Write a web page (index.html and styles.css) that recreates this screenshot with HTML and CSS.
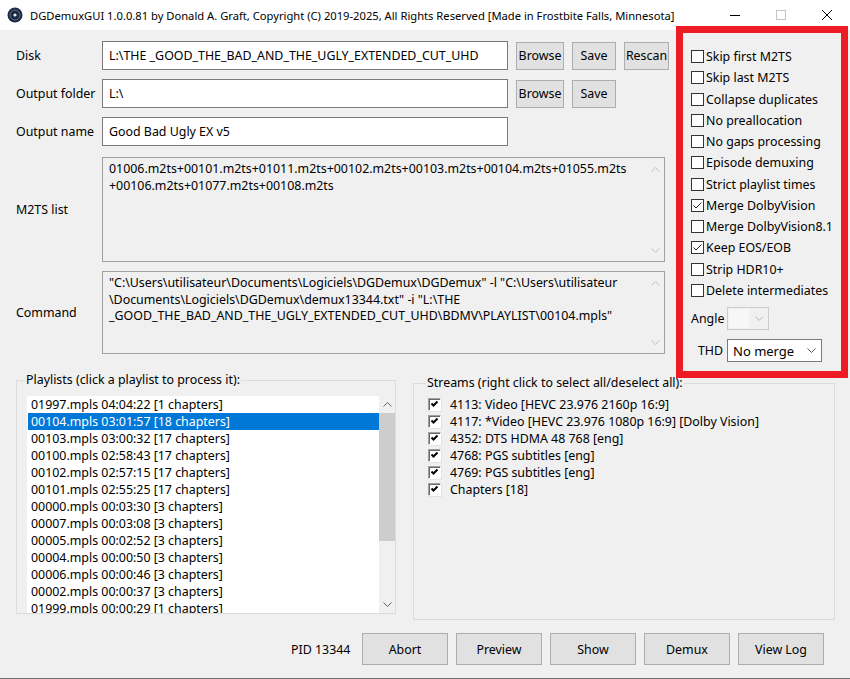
FILE: index.html
```html
<!DOCTYPE html>
<html lang="en">
<head>
  <meta charset="UTF-8">
  <title>DGDemuxGUI</title>
  <link rel="stylesheet" href="styles.css">
</head>
<body>
  <div class="titlebar">
    <svg class="app-icon" width="16" height="16" viewBox="0 0 16 16">
      <circle cx="8" cy="8" r="7.5" fill="#1c2940"/>
      <circle cx="8" cy="8" r="5" fill="none" stroke="#5d6f8c" stroke-width="1"/>
      <circle cx="8" cy="8" r="1.6" fill="#e8ecf2"/>
    </svg>
    <span class="title">DGDemuxGUI 1.0.0.81 by Donald A. Graft, Copyright (C) 2019-2025, All Rights Reserved [Made in Frostbite Falls, Minnesota]</span>
    <div class="caption-buttons">
      <span class="cap"><svg width="10" height="10" viewBox="0 0 10 10"><path d="M0 5.5 H10" stroke="#000" stroke-width="1"/></svg></span>
      <span class="cap"><svg width="10" height="10" viewBox="0 0 10 10"><rect x="0.5" y="0.5" width="9" height="9" fill="none" stroke="#c4c4c4"/></svg></span>
      <span class="cap"><svg width="10" height="10" viewBox="0 0 10 10"><path d="M0 0 L10 10 M10 0 L0 10" stroke="#000" stroke-width="1"/></svg></span>
    </div>
  </div>

  <div class="window">
    <div class="top">
      <div class="form">
        <div class="row row-disk">
          <span class="label">Disk</span>
          <div class="edit">L:\THE _GOOD_THE_BAD_AND_THE_UGLY_EXTENDED_CUT_UHD</div>
          <button class="btn btn-browse">Browse</button>
          <button class="btn btn-save">Save</button>
          <button class="btn btn-rescan">Rescan</button>
        </div>
        <div class="row row-folder">
          <span class="label">Output folder</span>
          <div class="edit">L:\</div>
          <button class="btn btn-browse">Browse</button>
          <button class="btn btn-save">Save</button>
        </div>
        <div class="row row-name">
          <span class="label">Output name</span>
          <div class="edit">Good Bad Ugly EX v5</div>
        </div>
        <div class="row row-m2ts">
          <span class="label">M2TS list</span>
          <div class="memo memo-m2ts">
            <div class="memo-text">01006.m2ts+00101.m2ts+01011.m2ts+00102.m2ts+00103.m2ts+00104.m2ts+01055.m2ts
+00106.m2ts+01077.m2ts+00108.m2ts</div>
            <div class="memo-scroll">
              <svg width="9" height="5" viewBox="0 0 9 5"><path d="M0.5 4.5 L4.5 0.5 L8.5 4.5" fill="none" stroke="#c2c2c2"/></svg>
              <svg width="9" height="5" viewBox="0 0 9 5"><path d="M0.5 0.5 L4.5 4.5 L8.5 0.5" fill="none" stroke="#c2c2c2"/></svg>
            </div>
          </div>
        </div>
        <div class="row row-command">
          <span class="label">Command</span>
          <div class="memo memo-command">
            <div class="memo-text">"C:\Users\utilisateur\Documents\Logiciels\DGDemux\DGDemux" -l "C:\Users\utilisateur
\Documents\Logiciels\DGDemux\demux13344.txt" -i "L:\THE
_GOOD_THE_BAD_AND_THE_UGLY_EXTENDED_CUT_UHD\BDMV\PLAYLIST\00104.mpls"</div>
            <div class="memo-scroll">
              <svg width="9" height="5" viewBox="0 0 9 5"><path d="M0.5 4.5 L4.5 0.5 L8.5 4.5" fill="none" stroke="#c2c2c2"/></svg>
              <svg width="9" height="5" viewBox="0 0 9 5"><path d="M0.5 0.5 L4.5 4.5 L8.5 0.5" fill="none" stroke="#c2c2c2"/></svg>
            </div>
          </div>
        </div>
      </div>

      <div class="options">
        <div class="opt"><span class="check"></span>Skip first M2TS</div>
        <div class="opt"><span class="check"></span>Skip last M2TS</div>
        <div class="opt"><span class="check"></span>Collapse duplicates</div>
        <div class="opt"><span class="check"></span>No preallocation</div>
        <div class="opt"><span class="check"></span>No gaps processing</div>
        <div class="opt"><span class="check"></span>Episode demuxing</div>
        <div class="opt"><span class="check"></span>Strict playlist times</div>
        <div class="opt"><span class="check checked"><svg width="11" height="11" viewBox="0 0 11 11"><path d="M1.5 5.5 L4 8 L9.5 2.5" fill="none" stroke="#222" stroke-width="1"/></svg></span>Merge DolbyVision</div>
        <div class="opt"><span class="check"></span>Merge DolbyVision8.1</div>
        <div class="opt"><span class="check checked"><svg width="11" height="11" viewBox="0 0 11 11"><path d="M1.5 5.5 L4 8 L9.5 2.5" fill="none" stroke="#222" stroke-width="1"/></svg></span>Keep EOS/EOB</div>
        <div class="opt"><span class="check"></span>Strip HDR10+</div>
        <div class="opt"><span class="check"></span>Delete intermediates</div>
        <div class="combo-row combo-angle">
          <span class="combo-label">Angle</span>
          <div class="combo disabled">
            <span class="combo-field"></span>
            <svg width="9" height="5" viewBox="0 0 9 5"><path d="M0.5 0.5 L4.5 4.5 L8.5 0.5" fill="none" stroke="#b4b4b4"/></svg>
          </div>
        </div>
        <div class="combo-row combo-thd">
          <span class="combo-label">THD</span>
          <div class="combo">
            <span class="combo-field">No merge</span>
            <svg width="9" height="5" viewBox="0 0 9 5"><path d="M0.5 0.5 L4.5 4.5 L8.5 0.5" fill="none" stroke="#555"/></svg>
          </div>
        </div>
      </div>
    </div>

    <div class="groups">
      <fieldset class="group playlists">
        <legend>Playlists (click a playlist to process it):</legend>
        <div class="listbox">
          <ul class="items">
            <li>01997.mpls 04:04:22 [1 chapters]</li>
            <li class="selected">00104.mpls 03:01:57 [18 chapters]</li>
            <li>00103.mpls 03:00:32 [17 chapters]</li>
            <li>00100.mpls 02:58:43 [17 chapters]</li>
            <li>00102.mpls 02:57:15 [17 chapters]</li>
            <li>00101.mpls 02:55:25 [17 chapters]</li>
            <li>00000.mpls 00:03:30 [3 chapters]</li>
            <li>00007.mpls 00:03:08 [3 chapters]</li>
            <li>00005.mpls 00:02:52 [3 chapters]</li>
            <li>00004.mpls 00:00:50 [3 chapters]</li>
            <li>00006.mpls 00:00:46 [3 chapters]</li>
            <li>00002.mpls 00:00:37 [3 chapters]</li>
            <li>01999.mpls 00:00:29 [1 chapters]</li>
          </ul>
          <div class="scrollbar">
            <span class="arrow"><svg width="9" height="5" viewBox="0 0 9 5"><path d="M0.5 4.5 L4.5 0.5 L8.5 4.5" fill="none" stroke="#606060"/></svg></span>
            <span class="thumb"></span>
            <span class="track"></span>
            <span class="arrow"><svg width="9" height="5" viewBox="0 0 9 5"><path d="M0.5 0.5 L4.5 4.5 L8.5 0.5" fill="none" stroke="#606060"/></svg></span>
          </div>
        </div>
      </fieldset>

      <fieldset class="group streams">
        <legend>Streams (right click to select all/deselect all):</legend>
        <div class="stream"><span class="check3d"><svg width="9" height="9" viewBox="0 0 9 9"><path d="M1.5 3.5 L3.5 5.5 L7.5 1.5" fill="none" stroke="#000" stroke-width="2"/></svg></span>4113: Video [HEVC 23.976 2160p 16:9]</div>
        <div class="stream"><span class="check3d"><svg width="9" height="9" viewBox="0 0 9 9"><path d="M1.5 3.5 L3.5 5.5 L7.5 1.5" fill="none" stroke="#000" stroke-width="2"/></svg></span>4117: *Video [HEVC 23.976 1080p 16:9] [Dolby Vision]</div>
        <div class="stream"><span class="check3d"><svg width="9" height="9" viewBox="0 0 9 9"><path d="M1.5 3.5 L3.5 5.5 L7.5 1.5" fill="none" stroke="#000" stroke-width="2"/></svg></span>4352: DTS HDMA 48 768 [eng]</div>
        <div class="stream"><span class="check3d"><svg width="9" height="9" viewBox="0 0 9 9"><path d="M1.5 3.5 L3.5 5.5 L7.5 1.5" fill="none" stroke="#000" stroke-width="2"/></svg></span>4768: PGS subtitles [eng]</div>
        <div class="stream"><span class="check3d"><svg width="9" height="9" viewBox="0 0 9 9"><path d="M1.5 3.5 L3.5 5.5 L7.5 1.5" fill="none" stroke="#000" stroke-width="2"/></svg></span>4769: PGS subtitles [eng]</div>
        <div class="stream"><span class="check3d"><svg width="9" height="9" viewBox="0 0 9 9"><path d="M1.5 3.5 L3.5 5.5 L7.5 1.5" fill="none" stroke="#000" stroke-width="2"/></svg></span>Chapters [18]</div>
      </fieldset>
    </div>

    <div class="footer">
      <span class="pid">PID 13344</span>
      <button class="btn btn-action">Abort</button>
      <button class="btn btn-action">Preview</button>
      <button class="btn btn-action">Show</button>
      <button class="btn btn-action">Demux</button>
      <button class="btn btn-action">View Log</button>
    </div>
  </div>
</body>
</html>
```

FILE: styles.css
```css
:root {
  --face: #f0f0f0;
  --edit-border: #7a7a7a;
  --btn-face: #e1e1e1;
  --btn-border: #adadad;
  --group-border: #dcdcdc;
  --select: #0078d7;
  --mark: #ed1c24;
}
* {
  box-sizing: border-box;
}
body {
  margin: 0;
  width: 850px;
  height: 679px;
  overflow: hidden;
  font-family: "Noto Sans", "Open Sans", sans-serif;
  font-size: 12.4px;
  color: #000;
  background-color: var(--face);
}
.titlebar {
  height: 30px;
  display: flex;
  align-items: center;
  background-color: #fff;
}
.app-icon {
  margin-left: 7px;
  margin-right: 7px;
}
.title {
  font-size: 11.2px;
  white-space: nowrap;
}
.caption-buttons {
  margin-left: auto;
  display: flex;
  height: 30px;
}
.cap {
  width: 46px;
  display: flex;
  align-items: center;
  justify-content: center;
}
.window {
  height: 649px;
  border-bottom: 1px solid #6f6f6f;
}
.top {
  display: flex;
  align-items: flex-start;
}
.form {
  width: 683px;
  padding: 11px 0 0 16px;
}
.row {
  display: flex;
  align-items: center;
}
.label {
  width: 86px;
  flex: none;
}
.edit {
  width: 406px;
  height: 29px;
  padding: 0 6px;
  line-height: 27px;
  background-color: #fff;
  border: 1px solid var(--edit-border);
  white-space: nowrap;
  overflow: hidden;
}
.row-folder,
.row-name {
  margin-top: 9px;
}
.row-m2ts {
  margin-top: 11px;
}
.row-command {
  margin-top: 9px;
}
.btn {
  font-family: inherit;
  font-size: 12.4px;
  color: #000;
  background-color: var(--btn-face);
  border: 1px solid var(--btn-border);
  padding: 0;
}
.row .btn {
  height: 28px;
  margin-left: 8px;
}
.btn-browse {
  width: 48px;
}
.btn-save {
  width: 44px;
}
.btn-rescan {
  width: 45px;
}
.memo {
  width: 563px;
  display: flex;
  border: 1px solid #a0a0a0;
  background-color: var(--face);
}
.memo-m2ts {
  height: 105px;
}
.memo-command {
  height: 83px;
}
.memo-text {
  flex: 1;
  padding: 3px 6px;
  line-height: 16.5px;
  white-space: pre;
  overflow: hidden;
}
.memo-scroll {
  width: 17px;
  display: flex;
  flex-direction: column;
  justify-content: space-between;
  align-items: center;
  padding: 9px 0 8px;
}
.options {
  width: 158px;
  height: 338px;
  margin-top: 3px;
  padding: 13px 0 0 8px;
  outline: 7px solid var(--mark);
}
.opt {
  height: 21.25px;
  display: flex;
  align-items: center;
  white-space: nowrap;
}
.check {
  width: 13px;
  height: 13px;
  margin-right: 2px;
  flex: none;
  display: flex;
  align-items: center;
  justify-content: center;
  border: 1px solid #333;
  background-color: #fff;
}
.combo-row {
  display: flex;
  align-items: center;
}
.combo-angle {
  margin-top: 6px;
}
.combo-thd {
  margin-top: 9px;
}
.combo-label {
  width: 36px;
  padding-right: 4px;
  text-align: right;
}
.combo-angle .combo-label {
  text-align: left;
}
.combo {
  height: 23px;
  display: flex;
  align-items: center;
  padding: 0 5px 0 5px;
  border: 1px solid var(--edit-border);
  background-color: #fff;
}
.combo.disabled {
  width: 42px;
  padding-left: 1px;
  border-color: #cccccc;
  background-color: var(--face);
}
.combo.disabled .combo-field {
  width: 21px;
  height: 19px;
  margin-right: 6px;
  background-color: #f7f7f7;
}
.combo-thd .combo {
  width: 95px;
  font-size: 13px;
}
.combo-thd .combo-field {
  flex: 1;
}
.groups {
  display: flex;
  align-items: flex-start;
}
.group {
  margin: 0;
  border: 1px solid var(--group-border);
  min-width: 0;
}
.group legend {
  padding: 0 1px;
  line-height: 16px;
}
.playlists {
  width: 380px;
  margin: 1px 0 0 16px;
  padding: 8px 0 0 10px;
}
.playlists legend {
  margin-left: -2px;
}
.listbox {
  height: 217px;
  display: flex;
  background-color: #fff;
  overflow: hidden;
}
.items {
  flex: 1;
  margin: 0;
  padding: 0 0 0 1px;
  list-style: none;
}
.items li {
  height: 17px;
  line-height: 17px;
  padding-left: 3px;
  white-space: nowrap;
}
.items li.selected {
  background-color: var(--select);
  color: #fff;
}
.scrollbar {
  width: 16px;
  display: flex;
  flex-direction: column;
  background-color: var(--face);
}
.arrow {
  height: 17px;
  flex: none;
  display: flex;
  align-items: center;
  justify-content: center;
}
.thumb {
  height: 128px;
  flex: none;
  background-color: #cdcdcd;
}
.track {
  flex: 1;
}
.streams {
  width: 422px;
  height: 245px;
  margin: 4px 0 0 17px;
  padding: 5px 0 0 14px;
}
.streams legend {
  margin-left: -2px;
}
.stream {
  height: 17px;
  display: flex;
  align-items: center;
  white-space: nowrap;
}
.check3d {
  width: 13px;
  height: 13px;
  margin-right: 9px;
  flex: none;
  display: flex;
  align-items: center;
  justify-content: center;
  background-color: #fff;
  border-top: 1px solid #a0a0a0;
  border-left: 1px solid #a0a0a0;
  border-right: 1px solid #fff;
  border-bottom: 1px solid #fff;
  box-shadow: inset 1px 1px 0 #696969, 1px 1px 0 #e3e3e3;
}
.footer {
  display: flex;
  align-items: center;
  margin-top: 13px;
  padding-left: 291px;
}
.pid {
  width: 71px;
}
.btn-action {
  width: 86px;
  height: 32px;
  margin-right: 8px;
}
```
